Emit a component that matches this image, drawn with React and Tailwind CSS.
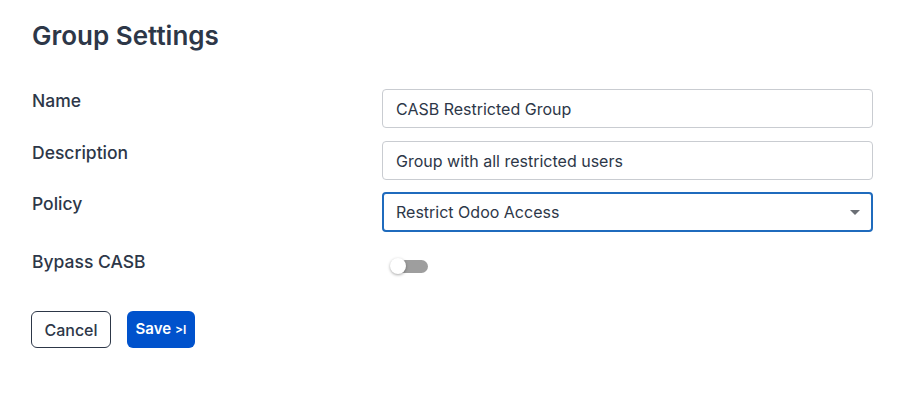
import { useState } from 'react';

const fieldClass =
  'w-full h-[39px] rounded-[4px] border border-[#c9ccd1] bg-white px-[13px] text-[16px] text-[#2d3748] outline-none';

const App = () => {
  const [name, setName] = useState('CASB Restricted Group');
  const [description, setDescription] = useState('Group with all restricted users');
  const [policy, setPolicy] = useState('Restrict Odoo Access');
  const [bypass, setBypass] = useState(false);

  return (
    <div
      className="min-h-[412px] bg-white pl-8 pr-10 pt-[19px] text-[#2d3748]"
      style={{ fontFamily: 'Inter, "Noto Sans", sans-serif' }}
    >
      {/* Header */}
      <h1 className="text-[26px] leading-[34px] font-semibold text-[#2d3748]">Group Settings</h1>

      {/* Fields */}
      <div className="mt-[36px]">
        <div className="flex items-start mb-[13px]">
          <label className="w-[350px] shrink-0 text-[17.5px] leading-6 font-medium">Name</label>
          <input className={fieldClass} value={name} onChange={(e) => setName(e.target.value)} />
        </div>

        <div className="flex items-start mb-[12px]">
          <label className="w-[350px] shrink-0 text-[17.5px] leading-6 font-medium">Description</label>
          <input
            className={fieldClass}
            value={description}
            onChange={(e) => setDescription(e.target.value)}
          />
        </div>

        <div className="flex items-start">
          <label className="w-[350px] shrink-0 text-[17.5px] leading-6 font-medium">Policy</label>
          <div className="relative flex-1">
            <select
              value={policy}
              onChange={(e) => setPolicy(e.target.value)}
              className="w-full h-[40px] appearance-none rounded-[4px] border-2 border-[#1f6bbd] bg-white pl-[12px] pr-10 text-[16px] text-[#2d3748] outline-none"
            >
              <option>Restrict Odoo Access</option>
              <option>Allow All</option>
            </select>
            <svg
              className="pointer-events-none absolute right-[13px] top-[18px]"
              width="10"
              height="5"
              viewBox="0 0 10 5"
            >
              <path d="M0 0h10L5 5z" fill="#6b6f75" />
            </svg>
          </div>
        </div>

        <div className="flex items-start mt-[18px]">
          <label className="w-[350px] shrink-0 text-[17.5px] leading-6 font-medium">Bypass CASB</label>
          <button
            onClick={() => setBypass(!bypass)}
            className="relative mt-[10px] ml-[8px] h-[13px] w-[38px]"
          >
            <span
              className={`absolute left-[8px] top-0 h-[13px] w-[30px] rounded-full ${
                bypass ? 'bg-[#7aa7e0]' : 'bg-[#9e9e9e]'
              }`}
            />
            <span
              className={`absolute top-[-2px] h-[16px] w-[16px] rounded-full bg-white shadow-[0_1px_3px_rgba(0,0,0,0.35)] ${
                bypass ? 'left-[22px]' : 'left-0'
              }`}
            />
          </button>
        </div>
      </div>

      {/* Actions */}
      <div className="mt-[37px] flex items-center gap-4">
        <button className="h-[37px] w-[80px] -ml-px rounded-[6px] border border-[#2d3748] bg-white text-[16px] font-medium text-[#2d3748]">
          Cancel
        </button>
        <button className="flex h-[37px] w-[68px] items-center justify-center gap-[4px] rounded-[6px] bg-[#0052cc] text-[15px] font-semibold text-white">
          <span>Save</span>
          <span className="text-[12px] font-semibold">&gt;I</span>
        </button>
      </div>
    </div>
  );
};

export default App;
